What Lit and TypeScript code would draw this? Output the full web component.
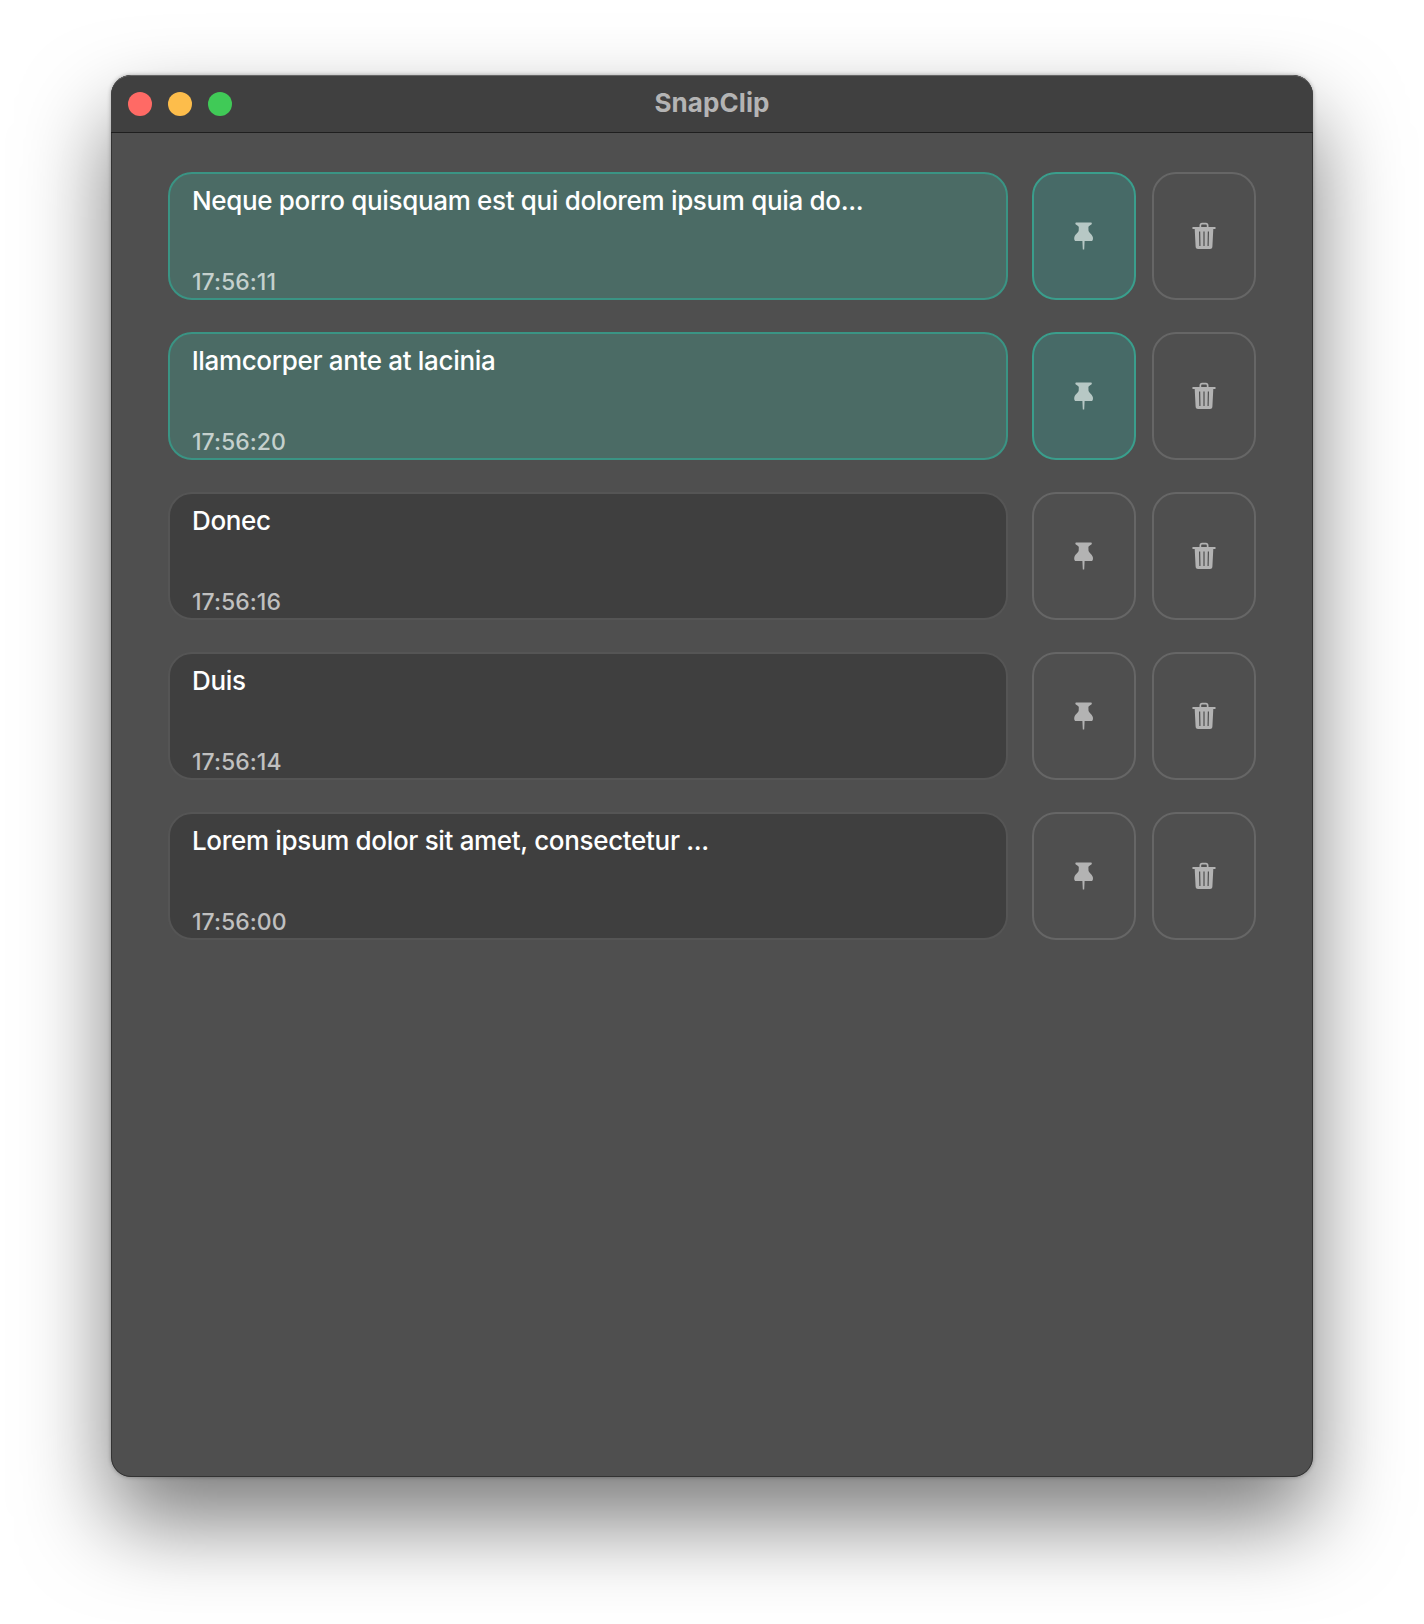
import { LitElement, html, css, svg } from "lit";
import { customElement } from "lit/decorators.js";

const items = [
  { text: "Neque porro quisquam est qui dolorem ipsum quia do...", time: "17:56:11", pinned: true },
  { text: "llamcorper ante at lacinia", time: "17:56:20", pinned: true },
  { text: "Donec", time: "17:56:16", pinned: false },
  { text: "Duis", time: "17:56:14", pinned: false },
  { text: "Lorem ipsum dolor sit amet, consectetur ...", time: "17:56:00", pinned: false },
];

const pinIcon = html`<svg class="icon pin" width="20" height="28" viewBox="0 0 20 28">
  ${svg`<path d="M2.4 0.5 H16.8 C17.9 0.5 18.2 1.8 17.4 2.5 C15.6 3.6 14.4 4.2 14.4 5.2 L14.5 8.5 C14.7 10.5 18 12.2 18.8 15 C19.3 16.8 18.8 19 17.4 19 H10.6 L10.2 27.5 H8.8 L8.4 19 H1.8 C0.4 19 -0.1 16.8 0.4 15 C1.2 12.2 4.5 10.5 4.7 8.5 L4.8 5.2 C4.8 4.2 3.6 3.6 1.8 2.5 C1 1.8 1.3 0.5 2.4 0.5 Z"/>`}
</svg>`;

const trashIcon = html`<svg class="icon" width="24" height="28" viewBox="0 0 24 28">
  ${svg`<path fill-rule="evenodd" d="M7.5 5 V3.5 C7.5 1.6 8.6 0.8 10 0.8 H14 C15.4 0.8 16.5 1.6 16.5 3.5 V5 H22.6 C23.3 5 23.7 5.4 23.7 6 C23.7 6.6 23.3 7 22.6 7 H21.3 L20.4 24.6 C20.3 26.4 19.3 27 18 27 H6 C4.7 27 3.7 26.4 3.6 24.6 L2.7 7 H1.4 C0.7 7 0.3 6.6 0.3 6 C0.3 5.4 0.7 5 1.4 5 Z M9.2 5 H14.8 V3.6 C14.8 2.8 14.4 2.4 13.7 2.4 H10.3 C9.6 2.4 9.2 2.8 9.2 3.6 Z M7 9.5 L7.3 24 H8.5 L8.2 9.5 Z M11.4 9.5 V24 H12.6 V9.5 Z M15.8 9.5 L15.5 24 H16.7 L17 9.5 Z"/>`}
</svg>`;

@customElement("app-root")
export class AppRoot extends LitElement {
  static styles = css`
    :host {
      display: block;
      width: 1424px;
      height: 1624px;
      box-sizing: border-box;
      padding: 75px 111px 147px;
      background: #fff;
      font-family: Inter, "Liberation Sans", sans-serif;
      overflow: hidden;
    }
    .window {
      height: 100%;
      box-sizing: border-box;
      display: flex;
      flex-direction: column;
      background: #4f4f4f;
      border-radius: 20px;
      overflow: hidden;
      outline: 1px solid #333;
      outline-offset: -1px;
    }
    .shadow {
      height: 100%;
      border-radius: 20px;
      box-shadow: 0 44px 88px rgba(0, 0, 0, 0.52), 0 0 4px rgba(0, 0, 0, 0.3);
    }
    .titlebar {
      position: relative;
      flex: none;
      height: 58px;
      box-sizing: border-box;
      display: flex;
      align-items: center;
      justify-content: center;
      padding-bottom: 4px;
      background: #404040;
      border-top: 1px solid #666;
      border-bottom: 1px solid #1f1f1f;
      border-radius: 20px 20px 0 0;
    }
    .lights {
      position: absolute;
      left: 17px;
      top: 16px;
      display: flex;
      gap: 16px;
    }
    .light {
      width: 24px;
      height: 24px;
      border-radius: 50%;
    }
    .red { background: #ff6a65; }
    .yellow { background: #fdbd4b; }
    .green { background: #40ca57; }
    .title {
      font-size: 26px;
      font-weight: 700;
      color: #b4b4b4;
      letter-spacing: 0.1px;
    }
    .list {
      flex: 1;
      display: flex;
      flex-direction: column;
      gap: 32px;
      padding: 39px 57px;
    }
    .row {
      display: flex;
      gap: 16px;
      height: 128px;
    }
    .card {
      flex: 1;
      min-width: 0;
      margin-right: 8px;
      box-sizing: border-box;
      display: flex;
      flex-direction: column;
      justify-content: space-between;
      padding: 11px 22px 0;
      background: #3f3f3f;
      border: 2px solid #555;
      border-radius: 24px;
    }
    .card.on {
      background: #4b6b65;
      border-color: #3a9484;
    }
    .text {
      font-size: 26px;
      font-weight: 450;
      line-height: 32px;
      color: #fff;
      white-space: nowrap;
      letter-spacing: -0.33px;
    }
    .time {
      font-size: 23px;
      font-weight: 450;
      line-height: 32px;
      letter-spacing: 0.05px;
      color: #c0c0c0;
    }
    .on .time { color: #c4d0cd; }
    .btn {
      flex: none;
      width: 104px;
      box-sizing: border-box;
      display: flex;
      align-items: center;
      justify-content: center;
      background: transparent;
      border: 2px solid #666;
      border-radius: 24px;
      padding: 0 1px 0 0;
    }
    .btn.on {
      background: #476a67;
      border-color: #3a9e8c;
    }
    .icon { display: block; fill: #b3b3b3; }
    .btn.on .icon { fill: #b7c8c5; }
  `;

  render() {
    return html`
      <div class="shadow">
        <div class="window">
          <div class="titlebar">
            <div class="lights">
              <div class="light red"></div>
              <div class="light yellow"></div>
              <div class="light green"></div>
            </div>
            <div class="title">SnapClip</div>
          </div>
          <div class="list">
            ${items.map(
              (i) => html`
                <div class="row">
                  <div class="card ${i.pinned ? "on" : ""}">
                    <div class="text">${i.text}</div>
                    <div class="time">${i.time}</div>
                  </div>
                  <button class="btn ${i.pinned ? "on" : ""}">${pinIcon}</button>
                  <button class="btn">${trashIcon}</button>
                </div>
              `
            )}
          </div>
        </div>
      </div>
    `;
  }
}
